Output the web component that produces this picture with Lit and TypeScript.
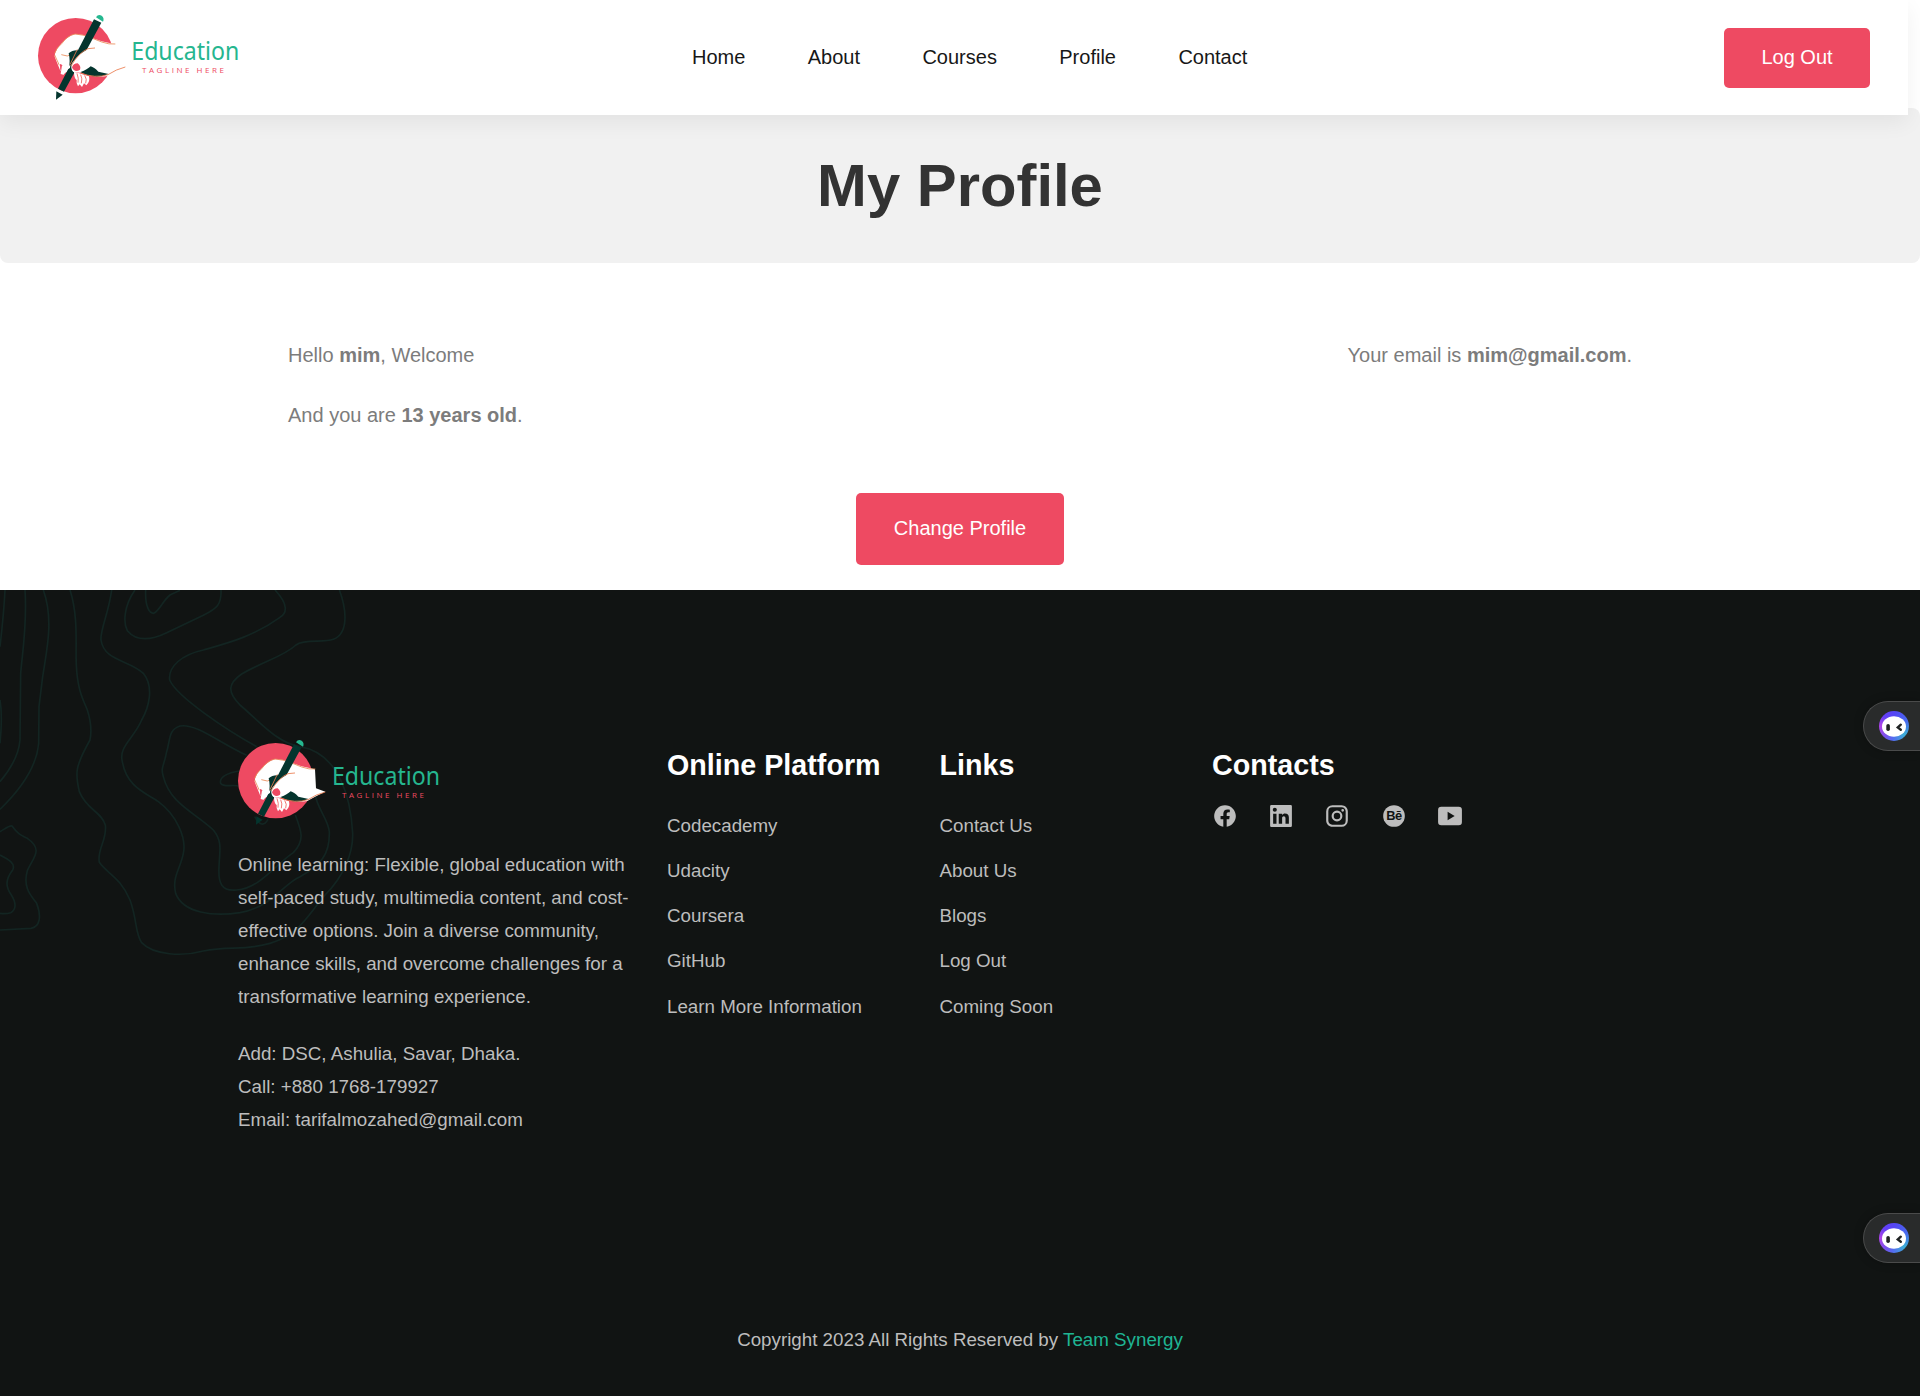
import { LitElement, html, css, svg } from "lit";
import { customElement, property } from "lit/decorators.js";

@customElement("brand-logo")
class BrandLogo extends LitElement {
  @property({ type: Boolean }) dark = false;

  static styles = css`
    :host { display: block; width: 240px; height: 120px; }
    .art { display: block; width: 240px; height: 120px; }
    .name { font-family: "Noto Sans", "Open Sans", sans-serif; font-size: 25px; fill: #25b68f; }
    .tag { font-family: "Open Sans", "Noto Sans", sans-serif; font-size: 8px; fill: #ee4a62; }
  `;

  render() {
    const flesh = svg`
      <path fill="#fff" d="${this.dark
        ? "M120 210 L104 170 Q104 155 118 138 Q138 112 162 103 Q188 101 210 112 L245 124 L285 133 L288 190 L316 200 Q285 214 262 228 Q225 236 184 217 L172 212 L152 210 L136 218 L130 224 Z"
        : "M120 210 L104 170 Q104 155 118 138 Q138 112 162 103 Q188 101 210 112 L245 124 L285 133 L288 190 L316 200 Q285 210 262 228 Q225 236 184 217 L172 212 L152 210 L136 218 L130 224 Z"}"/>`;
    return html`<svg class="art" viewBox="0 0 240 120">
      <g transform="scale(.33333)">
        <circle cx="167" cy="167" r="113" fill="#ee4a62"></circle>
        ${flesh}
        <path d="M104 160 Q108 144 126 130 Q142 106 166 102 Q190 104 210 112 L245 126 Q268 134 286 132" fill="none" stroke="#e98a55" stroke-width="2.5"></path>
        <path d="M104 165 L118 196 M124 164 L142 168 L158 162" fill="none" stroke="#e98a55" stroke-width="2.5"></path>
        <path d="M146 160 Q158 149 176 151 L196 158 L160 196 L146 206 Q152 185 146 160Z" fill="#04352e"></path>
        <path d="M222 58 L244 68 L132 275 L114 266 Z" fill="#04352e"></path>
        <path d="M228 52 Q234 42 245 47 Q254 54 249 65 Z" fill="#25b890"></path>
        <path d="M109 274 L128 284 L108 299 Z" fill="#04352e"></path>
        <path d="M156 190 Q180 154 210 146 L245 145 L270 172 L262 212 L208 214 L180 218 L160 216 Q150 208 156 190Z" fill="#fff"></path>
        <path d="M150 194 L172 148 M153 198 Q176 158 204 146 L225 144" fill="none" stroke="#e9794c" stroke-width="2.5"></path>
        <path d="M156 202 Q160 190 173 190 Q184 198 180 209 Q164 220 156 202Z" fill="#ee4a62"></path>
        <path d="M120 192 Q130 192 130 210 L124 220 Q119 206 120 192Z" fill="#ee4a62"></path>
        <path d="M122 222 L126 196 Q137 207 151 195 L150 204 Q139 208 130 224Z" fill="#fff"></path>
        <path d="M162 216 Q176 218 207 229 Q211 246 199 256 L192 250 L186 261 L179 253 L174 259 Q168 248 170 240 Q162 235 162 216Z" fill="#fff"></path>
        <path d="M182 224 Q188 236 184 250 M194 226 Q202 238 197 250 M171 220 Q177 236 174 248" fill="none" stroke="#ee5e58" stroke-width="2.5"></path>
        <path d="M182 216 Q202 209 212 199 Q222 202 235 215 L266 222 Q226 240 182 217Z" fill="#04352e"></path>
        <path d="M182 219 Q225 236 264 224 Q288 208 316 201" fill="none" stroke="#e9794c" stroke-width="2.5"></path>
      </g>
      <text class="name" x=${this.dark ? 112 : 111.3} y="60" textLength="108" lengthAdjust="spacingAndGlyphs">Education</text>
      <text class="tag" x="122" y="72.5" textLength="82">TAGLINE HERE</text>
    </svg>`;
  }
}

@customElement("social-icon")
class SocialIcon extends LitElement {
  @property() kind = "";

  static styles = css`
    :host { display: block; width: 26px; height: 26px; }
    .icon { display: block; width: 26px; height: 26px; fill: #bdbdbd; }
    .be { font: bold 12px "Liberation Sans", sans-serif; fill: #111413; letter-spacing: -.5px; }
  `;

  shape() {
    switch (this.kind) {
      case "facebook":
        return svg`<path d="M12 2.04C6.5 2.04 2 6.53 2 12.06C2 17.06 5.66 21.21 10.44 21.96V14.96H7.9V12.06H10.44V9.85C10.44 7.34 11.93 5.96 14.22 5.96C15.31 5.96 16.45 6.15 16.45 6.15V8.62H15.19C13.95 8.62 13.56 9.39 13.56 10.18V12.06H16.34L15.89 14.96H13.56V21.96C18.34 21.21 22 17.06 22 12.06C22 6.53 17.5 2.04 12 2.04Z"/>`;
      case "linkedin":
        return svg`<path transform="translate(-1.4 -1.4) scale(1.117)" d="M20 3A1 1 0 0 1 21 4V20A1 1 0 0 1 20 21H4A1 1 0 0 1 3 20V4A1 1 0 0 1 4 3H20M18.5 18.5V13.2A3.26 3.26 0 0 0 15.24 9.94C14.39 9.94 13.4 10.46 12.92 11.24V10.13H10.13V18.5H12.92V13.57C12.92 12.8 13.54 12.17 14.31 12.17A1.4 1.4 0 0 1 15.71 13.57V18.5H18.5M6.88 8.56A1.68 1.68 0 0 0 8.56 6.88C8.56 5.95 7.81 5.19 6.88 5.19A1.69 1.69 0 0 0 5.19 6.88C5.19 7.81 5.95 8.56 6.88 8.56M8.27 18.5V10.13H5.5V18.5H8.27Z"/>`;
      case "instagram":
        return svg`<path d="M7.8 2H16.2C19.4 2 22 4.6 22 7.8V16.2A5.8 5.8 0 0 1 16.2 22H7.8C4.6 22 2 19.4 2 16.2V7.8A5.8 5.8 0 0 1 7.8 2M7.6 4A3.6 3.6 0 0 0 4 7.6V16.4C4 18.39 5.61 20 7.6 20H16.4A3.6 3.6 0 0 0 20 16.4V7.6C20 5.61 18.39 4 16.4 4H7.6M17.25 5.5A1.25 1.25 0 0 1 17.25 8A1.25 1.25 0 0 1 17.25 5.5M12 7A5 5 0 0 1 12 17A5 5 0 0 1 12 7M12 9A3 3 0 0 0 12 15A3 3 0 0 0 12 9Z"/>`;
      case "behance":
        return svg`<circle cx="12" cy="12" r="10"/><text class="be" x="4.8" y="16" textLength="14.2" lengthAdjust="spacingAndGlyphs">Bē</text>`;
      default:
        return svg`<path fill-rule="evenodd" d="M4 3.5H20A3 3 0 0 1 23 6.5V17.5A3 3 0 0 1 20 20.5H4A3 3 0 0 1 1 17.5V6.5A3 3 0 0 1 4 3.5ZM9.8 8V16L16.3 12Z"/>`;
    }
  }

  render() {
    return html`<svg class="icon" viewBox="0 0 24 24">${this.shape()}</svg>`;
  }
}

@customElement("chat-tab")
class ChatTab extends LitElement {
  static styles = css`
    :host {
      box-sizing: border-box; display: flex; align-items: center;
      width: 57px; height: 50px; padding-left: 15px;
      background: #292b2b; border: 1px solid #4a4b4b; border-right: 0;
      border-radius: 25px 0 0 25px; box-shadow: 0 0 10px rgba(0, 0, 0, .25);
    }
    .ring {
      display: flex; align-items: center; justify-content: center;
      width: 30px; height: 30px; border-radius: 50%;
      background: conic-gradient(#5545f5, #476bed 70deg, #3cadd6 130deg, #536cf0 185deg, #7950eb 220deg, #b044e8 270deg, #633ff5 315deg, #5545f5);
    }
    .face { display: block; width: 24px; height: 21px; }
  `;
  render() {
    return html`<div class="ring"><svg class="face" viewBox="0 0 24 21">
      <ellipse cx="12" cy="10.5" rx="12" ry="10.3" fill="#fff"></ellipse>
      <rect x="4.3" y="8" width="3.6" height="7" rx="1.8" fill="#202323"></rect>
      <path d="M18.8 8.7 L15.8 11.4 L18.8 13.7" fill="none" stroke="#202323" stroke-width="2.4" stroke-linecap="round"></path>
    </svg></div>`;
  }
}

@customElement("app-root")
class AppRoot extends LitElement {
  static styles = css`
    :host {
      display: block; position: relative; width: 1920px; height: 1396px; overflow: hidden;
      background: #fff; font-family: "Liberation Sans", Arial, sans-serif; font-size: 20px; color: #7c7c7c;
    }
    .header {
      position: relative; z-index: 2; box-sizing: border-box; display: flex; align-items: center;
      width: 1908px; height: 115px; padding: 0 38px 0 20px; background: #fff;
      box-shadow: 0 8px 20px rgba(0, 0, 0, .06);
    }
    .header brand-logo { margin-top: 5px; }
    .nav { display: flex; gap: 62.4px; margin-left: 432px; margin-right: auto; }
    .nav a { color: #171717; }
    .btn {
      box-sizing: border-box; display: flex; align-items: center; justify-content: center;
      background: #ee4a62; color: #fff; border-radius: 5px;
    }
    .logout { width: 146px; height: 60px; padding-bottom: 1px; }
    .banner {
      box-sizing: border-box; height: 155px; margin-top: -7px; padding-top: 44px;
      background: #f1f1f1; border-radius: 8px; text-align: center;
    }
    .title { margin: 0; font-size: 59.8px; line-height: 68px; color: #333; }
    .profile { display: flex; justify-content: space-between; padding: 62px 288px 0; line-height: 60px; }
    .profile p { margin: 0; }
    .change { width: 208px; height: 72px; margin: 48px auto 25px; padding-bottom: 2px; }
    .footer { position: relative; box-sizing: border-box; height: 806px; background: #111413; color: #bdbdbd; font-size: 18.76px; padding-top: 130px; }
    .contour { position: absolute; left: 0; top: 0; width: 400px; height: 400px; fill: none; stroke: #132522; stroke-width: 5; }
    .columns { position: relative; display: flex; height: 588px; padding-left: 238px; }
    .about { width: 429px; line-height: 33px; }
    .about brand-logo { margin: 5px 0 0 -18px; }
    .about p { width: 400px; margin: 3px 0 24px; }
    .about address { font-style: normal; }
    .list { width: 272.5px; padding-top: 28px; }
    .list h2 { margin: 0 0 32.5px; font-size: 28.7px; line-height: 34px; color: #fff; }
    .list a { display: block; line-height: 21px; margin-bottom: 24.3px; }
    .social { display: flex; gap: 30.4px; margin: -12px 0 0 -.5px; }
    .copy { position: relative; padding-top: 21px; text-align: center; line-height: 22px; }
    .team { color: #1fb593; }
    .tab { position: absolute; right: 0; top: 701px; z-index: 3; }
    .tab.lower { top: 1213px; }
  `;

  contour() {
    return html`<svg class="contour" viewBox="0 30 1200 1200">
      <path d="M15 30 Q12 95 0 200 M75 30 C82 130 68 210 62 280 L60 480 Q55 540 0 605 M130 30 C162 120 140 210 128 290 L117 380 L116 490 C110 560 60 630 0 688 M0 360 Q8 410 0 490"/>
      <path d="M210 30 C236 110 226 200 229 255 C232 330 250 360 262 390 Q278 440 270 480 C225 560 225 580 238 635 C260 690 305 695 316 735 C322 780 290 810 298 847 C320 880 360 890 390 960 C412 1020 405 1060 425 1088 C460 1126 550 1130 610 1113 C690 1097 730 1113 810 1090 C900 1062 920 1010 975 945 C1030 890 1060 820 1058 760 C1053 660 1020 520 900 500 C830 488 780 426 720 375 C680 335 685 310 725 282 C790 244 850 230 888 195 C915 175 970 190 1000 178 C1050 158 1037 80 1018 30"/>
      <path d="M335 30 C326 100 300 150 303 180 C312 244 390 240 430 280 C462 320 448 380 425 420 C402 475 355 500 367 545 C380 622 440 640 475 665 C530 705 560 775 550 820 C542 865 515 890 527 940 C550 1000 640 1010 720 998 C820 980 850 910 900 890 C960 857 990 825 988 755 C984 715 950 685 945 640 M825 30 C867 75 860 100 840 112 C760 170 680 190 610 210 C545 224 504 260 509 300 C530 350 680 450 770 500"/>
      <path d="M405 30 C370 80 370 130 382 152 C410 185 455 180 500 158 L610 106 C650 85 665 75 663 30 M437 30 C435 80 448 100 461 100 C480 90 490 60 510 45 L540 31"/>
      <path d="M740 526 C660 490 590 430 540 438 C505 449 511 480 500 515 C492 560 481 560 490 590 C510 670 580 695 640 750 C668 785 659 810 657 860 C654 910 665 935 710 930 C780 925 830 850 880 818 C915 780 905 755 886 705 M720 573 C680 578 657 593 662 610 C675 625 700 610 720 620 M764 710 Q786 750 804 718"/>
      <path d="M0 755 C20 743 30 735 36 738 C52 760 60 764 82 775 C133 810 97 835 82 872 C67 925 96 950 110 970 C125 1010 120 1040 93 1045 L0 1050 M0 825 C25 838 48 850 38 870 C15 900 17 920 34 945 C50 970 48 990 32 998 Q20 1002 0 1000"/>
    </svg>`;
  }

  render() {
    const list = (title: string, items: string[]) =>
      html`<section class="list"><h2>${title}</h2>${items.map((item) => html`<a>${item}</a>`)}</section>`;
    return html`
      <header class="header">
        <brand-logo></brand-logo>
        <nav class="nav">${["Home", "About", "Courses", "Profile", "Contact"].map((item) => html`<a>${item}</a>`)}</nav>
        <a class="btn logout">Log Out</a>
      </header>
      <div class="banner"><h1 class="title">My Profile</h1></div>
      <main>
        <div class="profile">
          <div><p>Hello <b>mim</b>, Welcome</p><p>And you are <b>13 years old</b>.</p></div>
          <p>Your email is <b>mim@gmail.com</b>.</p>
        </div>
        <a class="btn change">Change Profile</a>
      </main>
      <footer class="footer">
        ${this.contour()}
        <div class="columns">
          <section class="about">
            <brand-logo dark></brand-logo>
            <p>Online learning: Flexible, global education with self-paced study, multimedia content, and cost-effective options. Join a diverse community, enhance skills, and overcome challenges for a transformative learning experience.</p>
            <address>Add: DSC, Ashulia, Savar, Dhaka.<br>Call: +880 1768-179927<br>Email: tarifalmozahed@gmail.com</address>
          </section>
          ${list("Online Platform", ["Codecademy", "Udacity", "Coursera", "GitHub", "Learn More Information"])}
          ${list("Links", ["Contact Us", "About Us", "Blogs", "Log Out", "Coming Soon"])}
          <section class="list">
            <h2>Contacts</h2>
            <div class="social">${["facebook", "linkedin", "instagram", "behance", "youtube"].map((kind) => html`<social-icon kind=${kind}></social-icon>`)}</div>
          </section>
        </div>
        <div class="copy">Copyright 2023 All Rights Reserved by <span class="team">Team Synergy</span></div>
      </footer>
      <chat-tab class="tab"></chat-tab>
      <chat-tab class="tab lower"></chat-tab>
    `;
  }
}
